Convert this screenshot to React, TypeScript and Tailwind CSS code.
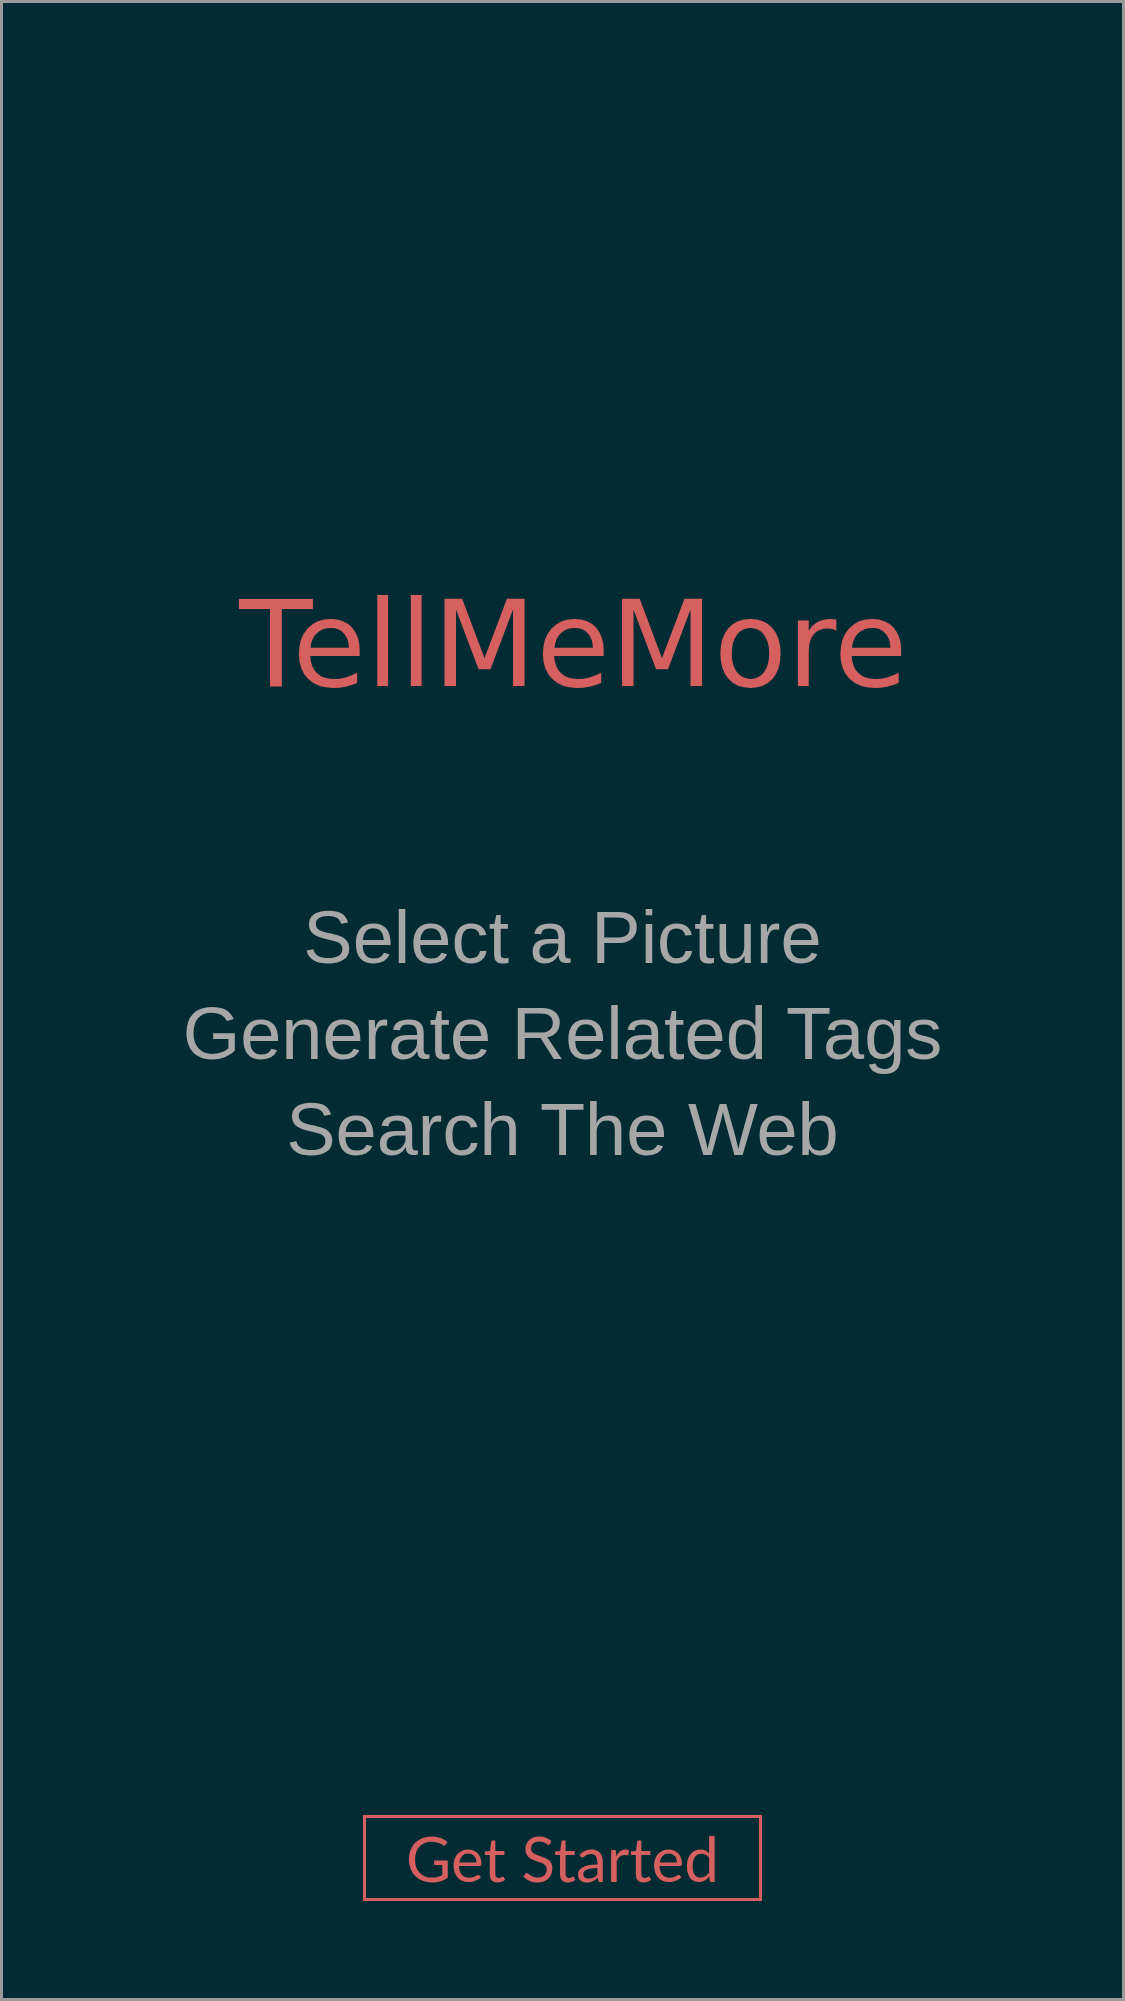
import React from 'react';

const steps = ["Select a Picture", "Generate Related Tags", "Search The Web"];

const App = () => {
  return (
    <div className="w-[1125px] h-[2001px] bg-[#022b33] border-[3px] border-[#9a9a9a] flex flex-col items-center">
      {/* Title sits a touch right of centre in the mock */}
      <h1 className="mt-[582px] pl-[22px] font-['DejaVu_Sans',sans-serif] text-[120px] leading-none text-[#d65f5f]">
        TellMeMore
      </h1>

      <div className="mt-[185px] flex flex-col items-center font-['Liberation_Sans',sans-serif] text-[74px] leading-[96px] text-[#a7a7a7]">
        {steps.map((s) => (
          <p key={s}>{s}</p>
        ))}
      </div>

      <button className="mt-[637px] w-[399px] h-[86px] border-[3px] border-[#d65f5f] flex items-center justify-center font-['Lato',sans-serif] text-[62px] leading-none text-[#d65f5f]">
        Get Started
      </button>
    </div>
  );
};

export default App;
